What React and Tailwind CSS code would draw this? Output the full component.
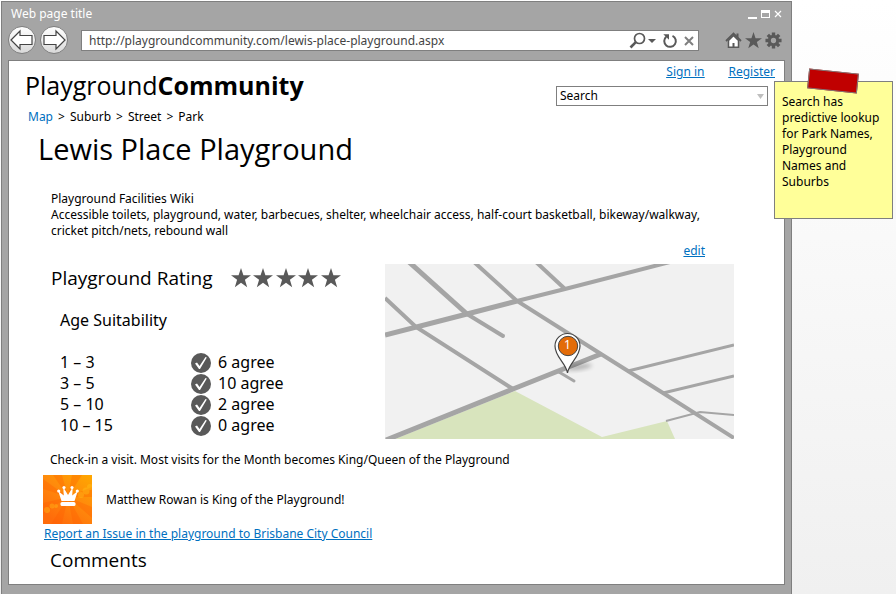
import React, { useState } from "react";

const ages = [
  { range: "1 – 3", agree: 6 },
  { range: "3 – 5", agree: 10 },
  { range: "5 – 10", agree: 2 },
  { range: "10 – 15", agree: 0 },
];

const STAR = "M12 0 L14.9 8.7 H24 L16.7 14.1 L19.4 23 L12 17.6 L4.6 23 L7.3 14.1 L0 8.7 H9.1 Z";

function Star({ className }) {
  return (
    <svg viewBox="0 0 24 24" className={className} aria-hidden="true">
      <path d={STAR} fill="currentColor" />
    </svg>
  );
}

function NavButton({ label, forward }) {
  return (
    <button
      type="button"
      aria-label={label}
      className="flex h-7 w-7 items-center justify-center rounded-full border border-[#7f7f7f] bg-linear-to-b from-white to-[#d9d9d9]"
    >
      <svg viewBox="0 0 26 22" className={forward ? "h-[22px] w-[26px] shrink-0 rotate-180" : "h-[22px] w-[26px] shrink-0"}>
        <path d="M2 11 L11 2 V6.5 H23 V15.5 H11 V20 Z" fill="#fff" stroke="#444" strokeWidth="1.2" />
      </svg>
    </button>
  );
}

function TitleBar() {
  return (
    <div className="flex h-6 items-center justify-between pl-[9px] pr-[9px] text-white">
      <h2 className="text-[12px] leading-4">Web page title</h2>
      <div className="flex items-center gap-1">
        <button type="button" aria-label="Minimize" className="flex h-[9px] w-[9px] items-end">
          <span className="h-0.5 w-full bg-white" />
        </button>
        <button type="button" aria-label="Maximize" className="h-2 w-[9px] border border-t-[3px] border-white" />
        <button type="button" aria-label="Close">
          <svg viewBox="0 0 8 8" className="block h-2 w-2">
            <path d="M1 1 L7 7 M7 1 L1 7" stroke="#fff" strokeWidth="1.2" />
          </svg>
        </button>
      </div>
    </div>
  );
}

function AddressBar() {
  const [url, setUrl] = useState("http://playgroundcommunity.com/lewis-place-playground.aspx");

  return (
    <div className="flex h-[34px] items-start pl-1.5 pr-[9px]">
      <div className="flex gap-1">
        <NavButton label="Back" />
        <NavButton label="Forward" forward />
      </div>
      <div className="ml-[13px] mt-1 flex h-[21px] flex-1 items-center border border-[#7f7f7f] bg-white pr-1 text-[#595959]">
        <input
          type="text"
          aria-label="Address"
          value={url}
          onChange={(e) => setUrl(e.target.value)}
          className="min-w-0 flex-1 bg-transparent pl-[7px] text-[12px] leading-4 text-[#444] outline-none"
        />
        <button type="button" aria-label="Find" className="flex items-center gap-0.5">
          <svg viewBox="0 0 17 17" className="h-[17px] w-[17px]">
            <circle cx="10.5" cy="6.5" r="5" fill="none" stroke="currentColor" strokeWidth="1.7" />
            <path d="M6.8 10.2 L1.5 15.5" stroke="currentColor" strokeWidth="2.6" />
          </svg>
          <svg viewBox="0 0 8 4" className="h-1 w-2">
            <path d="M0 0 H8 L4 4 Z" fill="currentColor" />
          </svg>
        </button>
        <button type="button" aria-label="Refresh" className="ml-1.5">
          <svg viewBox="0 0 16 16" className="block h-4 w-4">
            <path d="M10.5 2.8 A5.8 5.8 0 1 1 4.2 3.7" fill="none" stroke="currentColor" strokeWidth="2" />
            <path d="M1.3 1.2 H7 V6.8 Z" fill="currentColor" />
          </svg>
        </button>
        <button type="button" aria-label="Stop" className="ml-1.5">
          <svg viewBox="0 0 10 10" className="block h-2.5 w-2.5">
            <path d="M1 1 L9 9 M9 1 L1 9" stroke="#7f7f7f" strokeWidth="2" />
          </svg>
        </button>
      </div>
      <div className="ml-[26px] mt-1.5 flex gap-[3px] text-[#595959]">
        <button type="button" aria-label="Home">
          <svg viewBox="0 0 17 17" className="block h-[17px] w-[17px]">
            <path d="M11.5 1.5 H13.5 V6 L11.5 4 Z" fill="currentColor" />
            <path d="M1 9 L8.5 1.5 L16 9" fill="none" stroke="currentColor" strokeWidth="1.8" />
            <path d="M3.5 8.5 V15.2 H13.5 V8.5 L8.5 3.5 Z" fill="#fff" stroke="currentColor" strokeWidth="1.5" />
            <path d="M7.5 11 H9.5 V15.5 H7.5 Z" fill="currentColor" />
          </svg>
        </button>
        <button type="button" aria-label="Favorites">
          <Star className="block h-[17px] w-[17px]" />
        </button>
        <button type="button" aria-label="Settings">
          <svg viewBox="-9 -9 18 18" className="block h-[17px] w-[17px]">
            <g stroke="currentColor" strokeWidth="3.6">
              <path d="M0 -8.5 V-4 M0 4 V8.5 M-8.5 0 H-4 M4 0 H8.5" />
              <path d="M-6 -6 L-3 -3 M3 3 L6 6 M-6 6 L-3 3 M3 -3 L6 -6" />
            </g>
            <circle r="4.4" fill="none" stroke="currentColor" strokeWidth="3.2" />
          </svg>
        </button>
      </div>
    </div>
  );
}

function SearchBox() {
  const [query, setQuery] = useState("Search");

  return (
    <div className="flex h-5 w-[212px] items-center border border-[#7f7f7f] bg-white pr-[3px]">
      <input
        type="text"
        aria-label="Search"
        value={query}
        onChange={(e) => setQuery(e.target.value)}
        className="min-w-0 flex-1 bg-transparent pl-[3px] text-[12px] leading-4 outline-none"
      />
      <button type="button" aria-label="Show suggestions">
        <svg viewBox="0 0 7 5" className="block h-[5px] w-[7px]">
          <path d="M0 0 H7 L3.5 5 Z" fill="#bfbfbf" />
        </svg>
      </button>
    </div>
  );
}

function StreetMap() {
  return (
    <svg viewBox="0 0 349 175" className="block w-full" role="img" aria-label="Map of the playground">
      <defs>
        <filter id="soft" x="-50%" y="-50%" width="200%" height="200%">
          <feGaussianBlur stdDeviation="2" />
        </filter>
      </defs>
      <rect width="349" height="175" fill="#f1f1f1" />
      <path d="M10 175 L130 127 L217 173 L282 157 L290 175 Z" fill="#d8e4bd" />
      <g fill="none" stroke="#a5a5a5" strokeWidth="4">
        <path d="M0 71 L82 50 L132 37" strokeWidth="5" />
        <path d="M132 37 L180 25 L285 -2" />
        <path d="M24 -2 L82 50" strokeWidth="5" />
        <path d="M82 50 L118 72" strokeLinecap="round" />
        <path d="M89 -2 L132 37 L216 90 L243 107 L278 129 L349 174" />
        <path d="M151 -2 L180 25" />
        <path d="M0 34 L31 63 L128 125" />
        <path d="M1 176 L128 125 L216 90" strokeWidth="5" />
        <path d="M174 108 L189 117" strokeWidth="3" strokeLinecap="round" />
        <path d="M243 107 L349 81" strokeWidth="3" />
        <path d="M278 129 L349 112" strokeWidth="3" />
        <path d="M281 157 L315 148 L349 151" strokeWidth="2" />
      </g>
      <ellipse cx="194" cy="103" rx="13" ry="3" fill="#000" opacity="0.25" filter="url(#soft)" transform="rotate(-8 194 103)" />
      <path
        d="M182.5 109 C181 99 170 93 170 82 A12.5 12.5 0 0 1 195 82 C195 93 184 99 182.5 109 Z"
        fill="#fff"
        stroke="#444"
        strokeWidth="1.2"
      />
      <circle cx="183" cy="82" r="9.7" fill="#e36c09" stroke="#444" />
      <text x="182.5" y="85" textAnchor="middle" fill="#fff" fontSize="12">
        1
      </text>
    </svg>
  );
}

function CrownBadge() {
  return (
    <svg viewBox="0 0 49 49" className="h-[49px] w-[49px] shrink-0" role="img" aria-label="King badge">
      <defs>
        <linearGradient id="badge" x1="1" y1="0" x2="0.3" y2="1">
          <stop offset="0" stopColor="#ffa800" />
          <stop offset="0.5" stopColor="#ff8a0c" />
          <stop offset="1" stopColor="#ff6b0a" />
        </linearGradient>
      </defs>
      <rect width="49" height="49" fill="url(#badge)" />
      <g fill="#ff5a00" opacity="0.3">
        <path d="M25 22 L0 4 V14 Z" />
        <path d="M25 22 L10 0 H19 Z" />
        <path d="M25 22 L29 0 H39 Z" />
        <path d="M25 22 L49 12 V22 Z" />
        <path d="M25 22 L49 32 V43 Z" />
        <path d="M25 22 L40 49 H30 Z" />
        <path d="M25 22 L19 49 H8 Z" />
        <path d="M25 22 L0 39 V28 Z" />
      </g>
      <g fill="#ffc21a" opacity="0.4">
        <circle cx="4" cy="35" r="3" />
        <circle cx="9" cy="31" r="2.5" />
        <circle cx="13" cy="31" r="2" />
        <circle cx="38" cy="20" r="3" />
        <circle cx="43" cy="16" r="3.5" />
        <circle cx="47" cy="12" r="3" />
      </g>
      <g fill="#fff">
        <path d="M18.5 26 L15.2 16 L20.8 20.5 L20.2 12 L25 20 L29.8 12 L29.2 20.5 L34.8 16 L31.5 26 Z" />
        <circle cx="15.7" cy="16" r="1.6" />
        <circle cx="21" cy="12.5" r="1.6" />
        <circle cx="29" cy="12.5" r="1.6" />
        <circle cx="34.3" cy="16" r="1.6" />
        <rect x="17.5" y="27" width="15" height="4" rx="1.5" />
      </g>
    </svg>
  );
}

function AgeTable() {
  return (
    <table className="ml-[9px] mt-5 text-[16px] leading-[21px]">
      <tbody>
        {ages.map((age) => (
          <tr key={age.range}>
            <th scope="row" className="w-[131px] p-0 text-left font-normal">
              {age.range}
            </th>
            <td className="p-0">
              <div className="flex items-center gap-[7px]">
                <button type="button" aria-label={`Agree with ${age.range}`}>
                  <svg viewBox="0 0 20 20" className="block h-5 w-5">
                    <circle cx="10" cy="10" r="10" fill="#595959" />
                    <path d="M4 10.5 L6 9.5 L8.5 13 L14.5 4 L15.8 4.5 L9 16 H8 Z" fill="#fff" />
                  </svg>
                </button>
                {age.agree} agree
              </div>
            </td>
          </tr>
        ))}
      </tbody>
    </table>
  );
}

function StickyNote() {
  return (
    <aside className="absolute right-[3px] top-[81px] h-[138px] w-[119px] border border-[#7f7f7f] bg-[#ffff99] pl-[7px] pr-2 pt-3">
      <span className="absolute left-[33px] top-[-11px] h-5 w-[50px] rotate-6 border border-[#7f7f7f] bg-[#c00000]" />
      <p className="text-[12px] leading-4">Search has predictive lookup for Park Names, Playground Names and Suburbs</p>
    </aside>
  );
}

function App() {
  return (
    <div className="relative flex min-h-screen bg-linear-to-b from-white to-[#f0f0f0] pl-px pr-[104px] pt-px font-['Noto_Sans','Open_Sans',sans-serif] text-black">
      <div className="min-w-0 flex-1 border border-b-0 border-[#7f7f7f] bg-[#a5a5a5]">
        <TitleBar />
        <AddressBar />

        <main className="mx-1.5 mb-[9px] border border-[#7f7f7f] bg-white pb-2.5 text-[12px] leading-4">
          <header className="flex items-start justify-between pl-4 pr-4">
            <div>
              <div className="mt-2 font-['Open_Sans',sans-serif] text-[25px] leading-8">
                Playground<b>Community</b>
              </div>
              <nav className="ml-[3px] mt-2 flex gap-[5px]">
                <a href="#map" className="text-[#0070c0]">Map</a>
                <span>&gt;</span>
                <span>Suburb</span>
                <span>&gt;</span>
                <span>Street</span>
                <span>&gt;</span>
                <span>Park</span>
              </nav>
            </div>
            <div className="flex flex-col items-end pt-[3px]">
              <div className="mr-[-7px] flex gap-6 text-[#0070c0] underline">
                <a href="#signin">Sign in</a>
                <a href="#register">Register</a>
              </div>
              <div className="mt-1.5">
                <SearchBox />
              </div>
            </div>
          </header>

          <h1 className="ml-[29px] mt-1 font-['Open_Sans',sans-serif] text-[29px] leading-10">Lewis Place Playground</h1>

          <section className="ml-[42px] mr-[55px] mt-[22px]">
            <h2>Playground Facilities Wiki</h2>
            <p>
              Accessible toilets, playground, water, barbecues, shelter, wheelchair access, half-court basketball,
              bikeway/walkway, cricket pitch/nets, rebound wall
            </p>
            <div className="mt-1 pr-6 text-right">
              <a href="#edit" className="text-[#0070c0] underline">edit</a>
            </div>
          </section>

          <section className="ml-[42px] mr-[50px] mt-[5px] flex">
            <div className="w-[334px] shrink-0">
              <div className="flex items-center gap-[18px]">
                <h2 className="font-['Open_Sans',sans-serif] text-[19px] leading-7">Playground Rating</h2>
                <div className="flex w-[110px] justify-between text-[#595959]" role="img" aria-label="5 stars">
                  <Star className="h-5 w-5" />
                  <Star className="h-5 w-5" />
                  <Star className="h-5 w-5" />
                  <Star className="h-5 w-5" />
                  <Star className="h-5 w-5" />
                </div>
              </div>
              <h3 className="ml-[9px] mt-4 text-[16px] leading-6">Age Suitability</h3>
              <AgeTable />
            </div>
            <div className="min-w-0 flex-1">
              <StreetMap />
            </div>
          </section>

          <p className="ml-[41px] mt-[13px]">
            Check-in a visit. Most visits for the Month becomes King/Queen of the Playground
          </p>
          <div className="ml-[34px] mt-[7px] flex items-center gap-3.5">
            <CrownBadge />
            <p>Matthew Rowan is King of the Playground!</p>
          </div>
          <a href="#report" className="ml-[35px] mt-0.5 inline-block text-[#0070c0] underline">
            Report an Issue in the playground to Brisbane City Council
          </a>
          <h2 className="ml-[41px] mt-1 font-['Open_Sans',sans-serif] text-[19px] leading-7">Comments</h2>
        </main>
      </div>
      <StickyNote />
    </div>
  );
}

export default App;
